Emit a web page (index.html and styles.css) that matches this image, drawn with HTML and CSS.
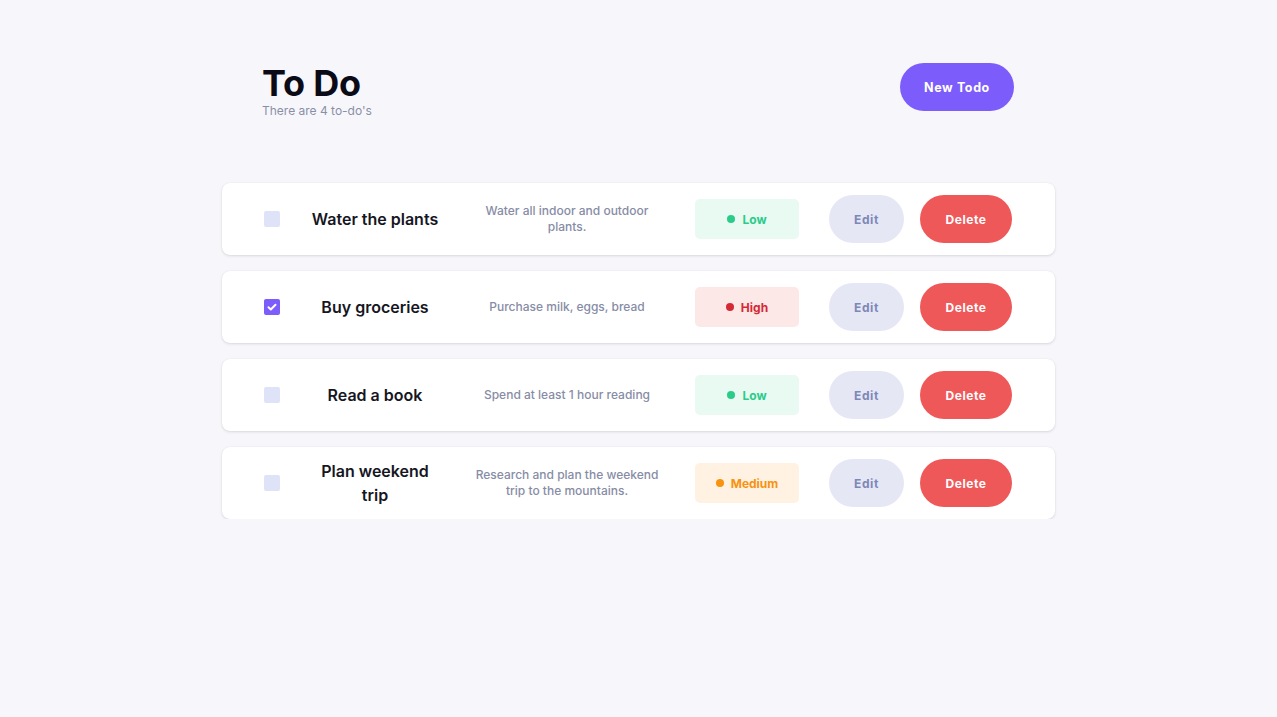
FILE: index.html
```html
<!DOCTYPE html>
<html lang="en">
<head>
<meta charset="utf-8">
<title>To Do</title>
<link rel="stylesheet" href="styles.css">
</head>
<body>
<main class="page">
  <header class="header">
    <div class="heading">
      <h1 class="title">To Do</h1>
      <p class="subtitle">There are 4 to-do's</p>
    </div>
    <button class="btn btn-new">New Todo</button>
  </header>

  <ul class="list">
    <li class="card">
      <span class="check"></span>
      <span class="name">Water the plants</span>
      <span class="desc">Water all indoor and outdoor plants.</span>
      <span class="badge badge-low"><i class="dot"></i>Low</span>
      <button class="btn btn-edit">Edit</button>
      <button class="btn btn-delete">Delete</button>
    </li>
    <li class="card">
      <span class="check checked"><svg viewBox="0 0 16 16" width="16" height="16"><path d="M4.5 8.3l2.3 2.2 4.7-4.8" fill="none" stroke="#fff" stroke-width="2" stroke-linecap="round" stroke-linejoin="round"/></svg></span>
      <span class="name">Buy groceries</span>
      <span class="desc">Purchase milk, eggs, bread</span>
      <span class="badge badge-high"><i class="dot"></i>High</span>
      <button class="btn btn-edit">Edit</button>
      <button class="btn btn-delete">Delete</button>
    </li>
    <li class="card">
      <span class="check"></span>
      <span class="name">Read a book</span>
      <span class="desc">Spend at least 1 hour reading</span>
      <span class="badge badge-low"><i class="dot"></i>Low</span>
      <button class="btn btn-edit">Edit</button>
      <button class="btn btn-delete">Delete</button>
    </li>
    <li class="card">
      <span class="check"></span>
      <span class="name">Plan weekend trip</span>
      <span class="desc">Research and plan the weekend trip to the mountains.</span>
      <span class="badge badge-medium"><i class="dot"></i>Medium</span>
      <button class="btn btn-edit">Edit</button>
      <button class="btn btn-delete">Delete</button>
    </li>
  </ul>
</main>
</body>
</html>
```

FILE: styles.css
```css
* { box-sizing: border-box; }

html, body {
  margin: 0;
  padding: 0;
  background: #f7f7fb;
  font-family: Inter, "Noto Sans", "Liberation Sans", sans-serif;
}

.page {
  width: 833px;
  margin: 0 auto;
  padding-top: 63px;
}

.header {
  display: flex;
  justify-content: space-between;
  align-items: flex-start;
  padding: 0 41px 0 40px;
  height: 120px;
}

.title {
  margin: 0;
  font-size: 36px;
  line-height: 40px;
  font-weight: 700;
  color: #0b0b18;
  letter-spacing: -0.2px;
}

.subtitle {
  margin: 0;
  font-size: 12px;
  line-height: 16px;
  color: #8a8fa8;
}

.btn {
  border: none;
  font-family: inherit;
  font-weight: 700;
  font-size: 12px;
  letter-spacing: 0.6px;
  border-radius: 24px;
  height: 48px;
  cursor: pointer;
}

.btn-new {
  width: 114px;
  background: #7c5cfa;
  color: #fff;
  font-size: 12.5px;
}

.list {
  list-style: none;
  margin: 0;
  padding: 0;
  display: flex;
  flex-direction: column;
  gap: 16px;
}

.card {
  display: flex;
  align-items: center;
  height: 72px;
  padding: 0 42px;
  background: #fff;
  border-radius: 8px;
  box-shadow: 0 1px 3px rgba(30, 30, 60, 0.14), 0 0 1px rgba(30, 30, 60, 0.08);
}

.check {
  flex: none;
  width: 16px;
  height: 16px;
  border-radius: 2px;
  background: #dfe3f8;
  display: flex;
}

.check.checked {
  background: #7c5cfa;
}

.name {
  flex: none;
  width: 134px;
  margin-left: 28px;
  text-align: center;
  font-size: 16px;
  line-height: 24px;
  font-weight: 600;
  color: #16161f;
}

.desc {
  flex: none;
  width: 190px;
  margin-left: 30px;
  text-align: center;
  font-size: 12px;
  line-height: 16px;
  font-weight: 500;
  color: #878ca6;
}

.badge {
  flex: none;
  width: 104px;
  height: 40px;
  margin-left: 33px;
  border-radius: 5px;
  display: flex;
  align-items: center;
  justify-content: center;
  gap: 7px;
  font-size: 12px;
  font-weight: 700;
}

.dot {
  width: 8px;
  height: 8px;
  border-radius: 50%;
  background: currentColor;
}

.badge-low { background: #e8faf2; color: #2bcb8a; }
.badge-high { background: #fde8e8; color: #d42a35; }
.badge-medium { background: #fff2e3; color: #f7930f; }

.btn-edit {
  flex: none;
  width: 75px;
  margin-left: 30px;
  background: #e5e7f5;
  color: #7f87b8;
}

.btn-delete {
  flex: none;
  width: 92px;
  margin-left: 16px;
  background: #ef5858;
  color: #fff;
}
```
